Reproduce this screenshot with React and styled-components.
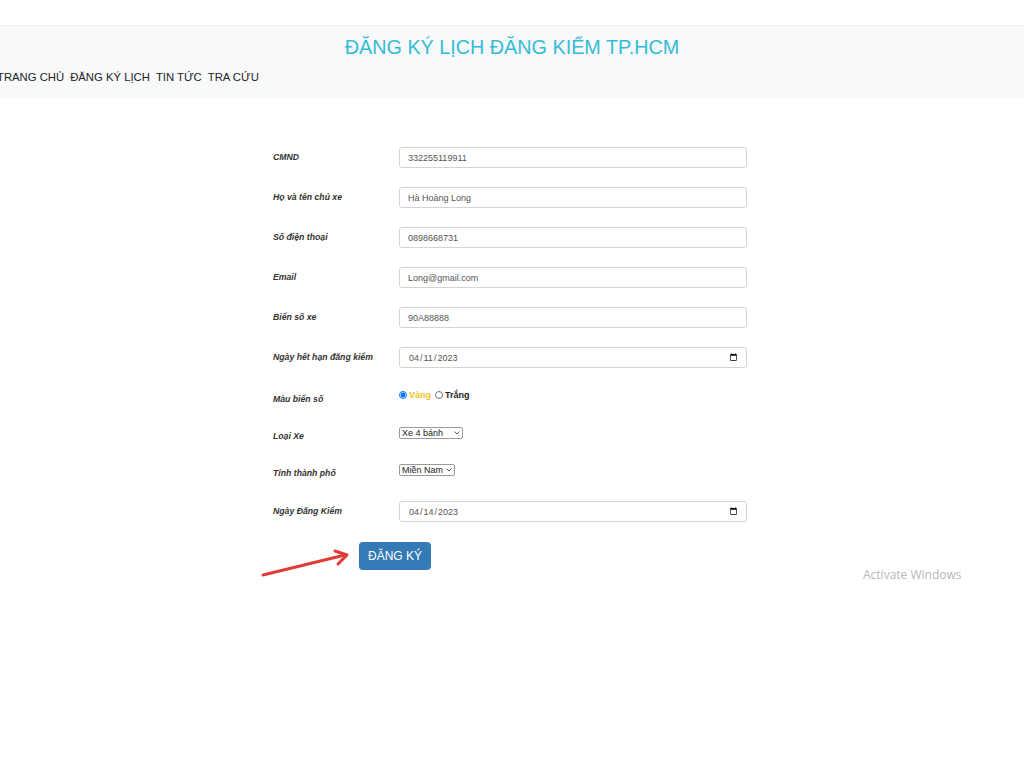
import React from 'react';
import styled, { createGlobalStyle } from 'styled-components';

const GlobalStyle = createGlobalStyle`
  html, body {
    margin: 0;
    padding: 0;
    background: #fff;
    font-family: "Liberation Sans", Arial, sans-serif;
  }
`;

const Page = styled.div`
  position: relative;
  width: 1024px;
  height: 768px;
  overflow: hidden;
  padding-top: 25px;
  box-sizing: border-box;
`;

const Header = styled.header`
  background-color: #f8f9fa;
  border-top: 1px solid #eef0f2;
  height: 72px;
  box-sizing: border-box;
  display: flex;
  flex-direction: column;
`;

const Title = styled.h1`
  margin: 0;
  padding-top: 10px;
  text-align: center;
  font-size: 19.8px;
  font-weight: normal;
  color: #33bcd5;
  line-height: 22px;
`;

const Nav = styled.nav`
  display: flex;
  gap: 6px;
  margin-left: -3px;
  margin-top: 12px;
`;

const NavItem = styled.a`
  color: #222;
  text-decoration: none;
  font-size: 11.3px;
  line-height: 14px;
`;

const FormWrap = styled.div`
  width: 474px;
  margin: 40px 0 0 273px;
`;

const Row = styled.div`
  display: grid;
  grid-template-columns: 126px 348px;
  align-items: center;
  height: ${({ $h }) => $h || 40}px;
`;

const Label = styled.label`
  font-size: 8.7px;
  font-weight: bold;
  font-style: italic;
  color: #333;
  padding-top: ${({ $drop }) => $drop || 0}px;
`;

const Input = styled.input`
  height: 21px;
  width: 348px;
  box-sizing: border-box;
  border: 1px solid #d4d4d4;
  border-radius: 3px;
  padding: 0 8px;
  font-family: "Liberation Sans", Arial, sans-serif;
  font-size: 9px;
  color: #555;
  background: #fff;
  outline: none;
  margin-top: 1px;
  &::-webkit-calendar-picker-indicator {
    width: 9px;
    height: 9px;
    margin: 0;
    padding: 0;
  }
`;

const RadioGroup = styled.div`
  display: flex;
  align-items: center;
  font-size: 9px;
  font-weight: bold;
  padding-bottom: 4px;
`;

const Radio = styled.input`
  width: 8px;
  height: 8px;
  margin: 0 2px 0 0;
`;

const RadioText = styled.span`
  color: ${({ $color }) => $color || '#222'};
  margin-right: 4px;
`;

const SelectCell = styled.div`
  align-self: start;
  display: flex;
  padding-top: 10px;
`;

const SelectBox = styled.div`
  position: relative;
`;

const Select = styled.select`
  appearance: none;
  -webkit-appearance: none;
  width: ${({ $w }) => $w}px;
  height: 12px;
  box-sizing: border-box;
  font-family: "Liberation Sans", Arial, sans-serif;
  font-size: 9px;
  line-height: 10px;
  padding: 0 10px 0 2px;
  border: 1px solid #9a9a9a;
  border-radius: 2px;
  background: #fff;
  color: #222;
  display: block;
`;

const Chevron = styled.svg`
  position: absolute;
  right: 3px;
  top: 4px;
  pointer-events: none;
`;

const ButtonRow = styled.div`
  position: relative;
  padding: 11px 0 0 86px;
`;

const Button = styled.button`
  width: 72px;
  height: 28px;
  background: #337ab7;
  color: #fff;
  border: none;
  border-radius: 4px;
  font-family: "Liberation Sans", Arial, sans-serif;
  font-size: 12px;
`;

const Arrow = styled.svg`
  position: absolute;
  left: -12px;
  top: 18px;
`;

const Watermark = styled.div`
  position: absolute;
  left: 863px;
  top: 566px;
  font-family: "Open Sans", "Liberation Sans", sans-serif;
  font-size: 12px;
  color: #b8b8b8;
`;

const fields = [
  { label: 'CMND', value: '332255119911' },
  { label: 'Họ và tên chủ xe', value: 'Hà Hoàng Long' },
  { label: 'Số điện thoại', value: '0898668731' },
  { label: 'Email', value: 'Long@gmail.com' },
  { label: 'Biển số xe', value: '90A88888' },
];

const Dropdown = ({ width, options }) => (
  <SelectBox>
    <Select $w={width} defaultValue={options[0]}>
      {options.map((o) => (
        <option key={o}>{o}</option>
      ))}
    </Select>
    <Chevron width="6" height="4" viewBox="0 0 6 4">
      <polyline points="0.5,0.5 3,3 5.5,0.5" fill="none" stroke="#444" strokeWidth="0.9" />
    </Chevron>
  </SelectBox>
);

export default function App() {
  return (
    <Page>
      <GlobalStyle />
      <Header>
        <Title>ĐĂNG KÝ LỊCH ĐĂNG KIỂM TP.HCM</Title>
        <Nav>
          <NavItem href="#">TRANG CHỦ</NavItem>
          <NavItem href="#">ĐĂNG KÝ LỊCH</NavItem>
          <NavItem href="#">TIN TỨC</NavItem>
          <NavItem href="#">TRA CỨU</NavItem>
        </Nav>
      </Header>

      <FormWrap>
        {fields.map((f) => (
          <Row key={f.label}>
            <Label>{f.label}</Label>
            <Input type="text" defaultValue={f.value} />
          </Row>
        ))}
        <Row>
          <Label>Ngày hết hạn đăng kiểm</Label>
          <Input type="date" defaultValue="2023-04-11" />
        </Row>
        <Row>
          <Label $drop={3}>Màu biển số</Label>
          <RadioGroup>
            <Radio type="radio" name="mau" defaultChecked />
            <RadioText $color="#f2c232">Vàng</RadioText>
            <Radio type="radio" name="mau" />
            <RadioText>Trắng</RadioText>
          </RadioGroup>
        </Row>
        <Row $h={37}>
          <Label>Loại Xe</Label>
          <SelectCell>
            <Dropdown width={64} options={['Xe 4 bánh', 'Xe 2 bánh']} />
          </SelectCell>
        </Row>
        <Row $h={37}>
          <Label>Tỉnh thành phố</Label>
          <SelectCell>
            <Dropdown width={56} options={['Miền Nam', 'Miền Bắc']} />
          </SelectCell>
        </Row>
        <Row>
          <Label>Ngày Đăng Kiểm</Label>
          <Input type="date" defaultValue="2023-04-14" />
        </Row>
        <ButtonRow>
          <Arrow width="92" height="30" viewBox="0 0 92 30">
            <line x1="2" y1="26" x2="84" y2="6" stroke="#e23b36" strokeWidth="3" strokeLinecap="round" />
            <polyline points="74,2 86,6 77,15" fill="none" stroke="#e23b36" strokeWidth="3" strokeLinecap="round" strokeLinejoin="round" />
          </Arrow>
          <Button>ĐĂNG KÝ</Button>
        </ButtonRow>
      </FormWrap>

      <Watermark>Activate Windows</Watermark>
    </Page>
  );
}
